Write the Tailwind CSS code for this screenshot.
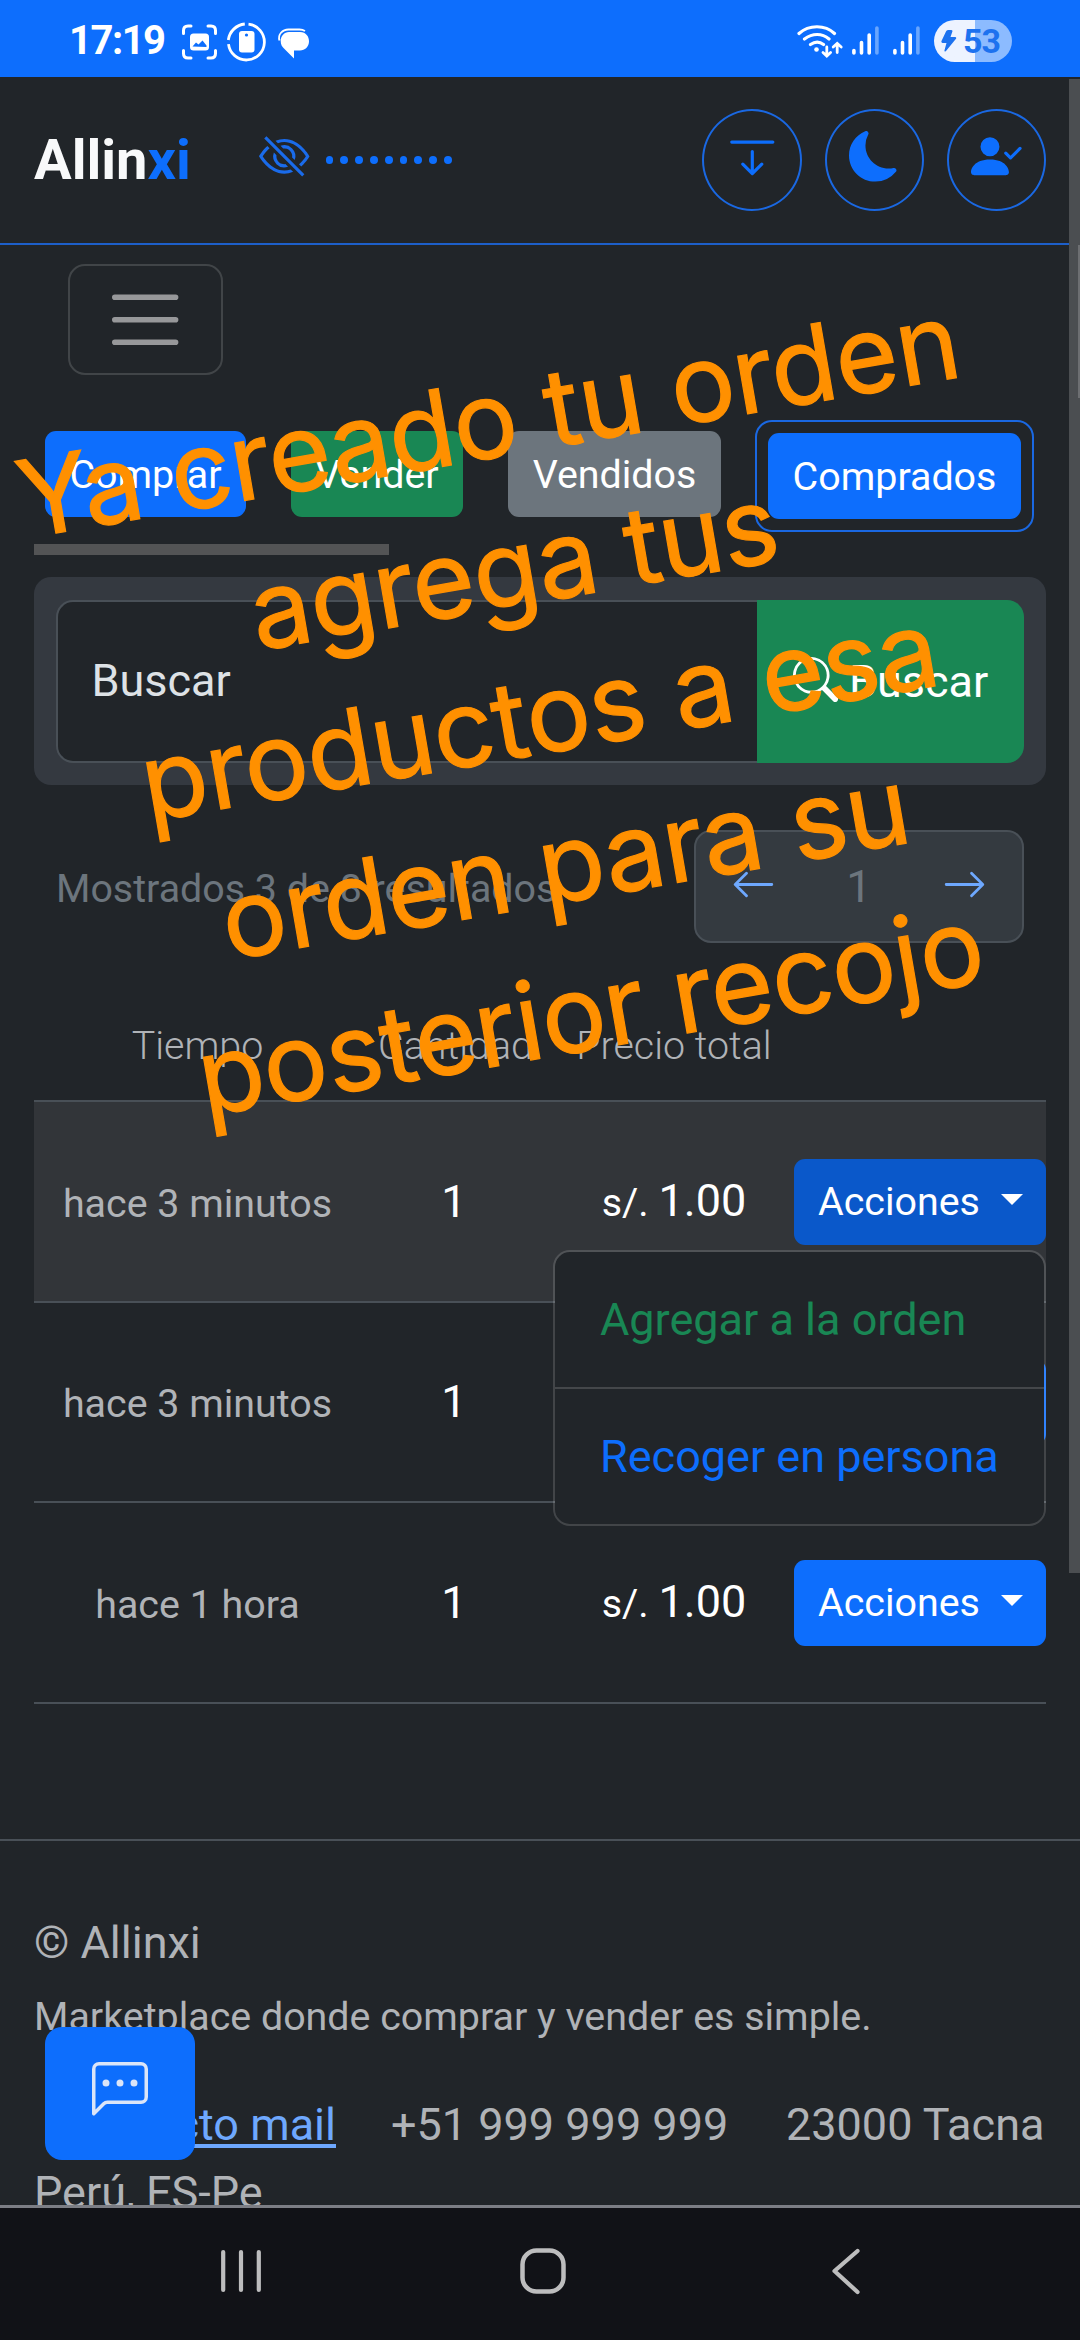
<!DOCTYPE html>
<html lang="es">
<head>
<meta charset="utf-8">
<title>Allinxi</title>
<script src="https://cdn.jsdelivr.net/npm/@tailwindcss/browser@4"></script>
</head>
<body class="relative flex h-[2340px] w-[1080px] flex-col overflow-hidden bg-[#212529] font-['Roboto',sans-serif] text-[45px] leading-[68px] text-white">

  <!-- System status bar -->
  <div class="flex h-[77px] shrink-0 items-center bg-[#0d6efd] pl-[69px]">
    <span class="w-[113px] pt-[5px] font-['Roboto',sans-serif] text-[40px] leading-[48px] font-bold tracking-[-1.500px] whitespace-nowrap">17:19</span>
    <svg class="mt-[6px] h-[40px] w-[130px]" viewBox="182 21.500 130 40" fill="none" stroke="#fff">
      <path stroke-width="3" stroke-linecap="round" d="M183.500 33v-3q0-4.500 4.500-4.500h3M208 25.500h3q4.500 0 4.500 4.500v3M215.500 50v3q0 4.500-4.500 4.500h-3M191 57.500h-3q-4.500 0-4.500-4.500v-3"/>
      <rect x="190" y="33" width="19" height="17" rx="3.500" fill="#fff" stroke="none"/>
      <path d="M192.500 46l3.500-4 2.500 2 4-4 4 5v1.500z" fill="#0d6efd" stroke="none"/>
      <path stroke-width="2.800" d="M248.500 23.600a18 18 0 1 1-20 20M228.300 39.500a18.500 18.500 0 0 1 16.500-16"/>
      <rect x="239" y="30.500" width="15.500" height="21.500" rx="3" fill="#fff" stroke="none"/>
      <circle cx="246.500" cy="34.500" r="1.600" fill="#0d6efd" stroke="none"/>
      <path d="M289 31.500h11c6 0 9 4.500 9 9.500s-4 9-9 9h-6v8l-9-9c-3-2.500-4.300-5-4.300-8.500 0-5 3.500-9 8.300-9z" fill="#fff" stroke="none"/>
      <path d="M279.500 40c-2-6 3-11 9-11h11c2.500 0 4 .5 5.500 1.500" stroke-width="1.800"/>
    </svg>
    <svg class="ml-[485px] mt-[4px] h-[40px] w-[128px]" viewBox="796 22 128 40" fill="none" stroke="#fff" stroke-width="3.200" stroke-linecap="round">
      <path d="M798 34.500c10-9 26-9 35.500 0M803.500 40c8-6 17.500-6 24.500 0M809.500 45.500c4.500-3 9-3 13 0"/>
      <circle cx="815.500" cy="50.500" r="2.300" fill="#fff" stroke="none"/>
      <path stroke-width="2.800" d="M825.800 48v8.500M822 53.500l3.800 3.500 3.800-3.500M836.200 53.500v-8.500M832.200 48l4-3.700 4 3.700"/>
      <path stroke-width="3.600" d="M852.900 51.500v2.500M860.500 43.500v10.500M868.200 36v18M893.900 51.500v2.500M901.500 43.500v10.500M909.200 36v18"/>
      <path stroke-width="3.600" stroke="#69a6fe" d="M875.900 29v25M916.900 29v25"/>
    </svg>
    <div class="mt-[5px] ml-[9px] flex h-[42px] w-[78px] items-center overflow-hidden rounded-full bg-linear-to-r from-[#edf3ff] from-52% to-[#8cbbff] to-52% pl-[7px] text-[#1d72ef]">
      <svg class="h-[22px] w-[16px]" viewBox="0 0 16 22" fill="currentColor"><path d="M5 1.500Q5.500 0 7 0h3q2 0 1.300 1.700L9.500 7H14q2 .3.800 2L5 21q-1.800 1.500-1.500-.7L5.500 13H1.500Q0 12.500.500 11z"/></svg>
      <span class="ml-[6px] text-[34px] leading-[42px] font-bold tracking-[-1px]">53</span>
    </div>
  </div>

  <div class="relative min-h-0 flex-1 overflow-hidden">
    <!-- Header -->
    <header class="flex h-[168px] items-center border-b-2 border-[#1d5fc9] px-[34px]">
      <div class="w-[225px] text-[56px] leading-[68px] font-bold text-[#f8f9fa]">Allin<span class="text-[#0d6efd]">xi</span></div>
      <svg class="mb-[7px] size-[50.600px] text-[#1a6bea]" viewBox="0 0 16 16" fill="currentColor">
        <path d="M13.359 11.238C15.060 9.720 16 8 16 8s-3-5.500-8-5.500a7 7 0 0 0-2.790.588l.770.771A6 6 0 0 1 8 3.500c2.120 0 3.879 1.168 5.168 2.457A13 13 0 0 1 14.828 8q-.086.130-.195.288c-.335.480-.830 1.120-1.465 1.755q-.247.248-.517.486z"/>
        <path d="M11.297 9.176a3.500 3.500 0 0 0-4.474-4.474l.823.823a2.500 2.500 0 0 1 2.829 2.829zm-2.943 1.299.822.822a3.500 3.500 0 0 1-4.474-4.474l.823.823a2.500 2.500 0 0 0 2.829 2.829"/>
        <path d="M3.350 5.470q-.270.240-.518.487A13 13 0 0 0 1.172 8l.195.288c.335.480.830 1.120 1.465 1.755C4.121 11.332 5.881 12.500 8 12.500c.716 0 1.390-.133 2.020-.360l.770.772A7 7 0 0 1 8 13.500C3 13.500 0 8 0 8s.939-1.721 2.641-3.238l.708.709zm10.296 8.884-12-12 .708-.708 12 12z"/>
      </svg>
      <div class="ml-[16px] flex gap-[7px]">
        <i class="size-[7.800px] rounded-full bg-[#0d6efd]"></i><i class="size-[7.800px] rounded-full bg-[#0d6efd]"></i><i class="size-[7.800px] rounded-full bg-[#0d6efd]"></i><i class="size-[7.800px] rounded-full bg-[#0d6efd]"></i><i class="size-[7.800px] rounded-full bg-[#0d6efd]"></i><i class="size-[7.800px] rounded-full bg-[#0d6efd]"></i><i class="size-[7.800px] rounded-full bg-[#0d6efd]"></i><i class="size-[7.800px] rounded-full bg-[#0d6efd]"></i><i class="size-[7.800px] rounded-full bg-[#0d6efd]"></i>
      </div>
      <div class="ml-auto flex gap-[23px] text-[#0d6efd]">
        <div class="flex h-[102px] w-[100px] items-center justify-center rounded-[50%] border-2 border-[#1a68e2] pb-[7px]">
          <svg class="size-[50.600px]" viewBox="0 0 16 16" fill="currentColor"><path d="M1 3.500a.5.5 0 0 1 .5-.5h13a.5.5 0 0 1 0 1h-13a.5.5 0 0 1-.5-.5M8 6a.5.5 0 0 1 .5.5v5.793l2.146-2.147a.5.5 0 0 1 .708.708l-3 3a.5.5 0 0 1-.708 0l-3-3a.5.5 0 0 1 .708-.708L7.500 12.293V6.500A.5.5 0 0 1 8 6"/></svg>
        </div>
        <div class="flex h-[102px] w-[99px] items-center justify-center rounded-[50%] border-2 border-[#1a68e2] pb-[7px]">
          <svg class="size-[50.600px]" viewBox="0 0 16 16" fill="currentColor"><path d="M6 .278a.77.77 0 0 1 .08.858 7.200 7.200 0 0 0-.878 3.460c0 4.021 3.278 7.277 7.318 7.277q.792-.001 1.533-.160a.79.79 0 0 1 .81.316.73.73 0 0 1-.031.893A8.350 8.350 0 0 1 8.344 16C3.734 16 0 12.286 0 7.710 0 4.266 2.114 1.312 5.124.060A.75.75 0 0 1 6 .278"/></svg>
        </div>
        <div class="flex h-[102px] w-[99px] items-center justify-center rounded-[50%] border-2 border-[#1a68e2] pb-[7px]">
          <svg class="size-[50.600px]" viewBox="0 0 16 16" fill="currentColor"><path fill-rule="evenodd" d="M15.854 5.146a.5.5 0 0 1 0 .708l-3 3a.5.5 0 0 1-.708 0l-1.500-1.500a.5.5 0 0 1 .708-.708L12.500 7.793l2.646-2.647a.5.5 0 0 1 .708 0"/><path d="M1 14s-1 0-1-1 1-4 6-4 6 3 6 4-1 1-1 1zm5-6a3 3 0 1 0 0-6 3 3 0 0 0 0 6"/></svg>
        </div>
      </div>
    </header>

    <main class="px-[34px] pt-[19px]">
      <button class="ml-[34px] flex h-[111px] w-[155px] items-center justify-center rounded-[17px] border-2 border-[#414548]">
        <svg class="size-[84.400px]" viewBox="0 0 30 30"><path stroke="#97989a" stroke-linecap="round" stroke-width="2" d="M4.200 7.200h21.600M4.200 15.200h21.600M4.200 23.200h21.600"/></svg>
      </button>

      <!-- Section tabs -->
      <div class="mt-[45px] flex h-[112px] pl-[11px] text-[39.400px] leading-[59px]">
        <div class="mt-[11px] flex h-[86px] w-[201px] items-center justify-center rounded-[11px] bg-[#0d6efd]">Comprar</div>
        <div class="mt-[11px] ml-[45px] flex h-[86px] w-[172px] items-center justify-center rounded-[11px] bg-[#198754]">Vender</div>
        <div class="mt-[11px] ml-[45px] flex h-[86px] w-[213px] items-center justify-center rounded-[11px] bg-[#6c757d]">Vendidos</div>
        <div class="ml-[34px] h-[112px] w-[279px] rounded-[17px] border-2 border-[#1a68e2] p-[11px]">
          <div class="flex h-[86px] items-center justify-center rounded-[11px] bg-[#0d6efd]">Comprados</div>
        </div>
      </div>
      <div class="mt-[12px] h-[11px] w-[355px] bg-[#535455]"></div>

      <!-- Search -->
      <div class="mt-[22px] flex h-[208px] rounded-[17px] bg-[#343940] px-[22px] pt-[23px] pb-[22px]">
        <div class="flex w-[701px] items-center rounded-l-[17px] border-2 border-r-0 border-[#495057] bg-[#212529] pb-[2px] pl-[33.500px] text-[#dee2e6]">Buscar</div>
        <div class="flex flex-1 items-center gap-[11px] rounded-r-[17px] bg-[#198754] pl-[36px]">
          <svg class="mb-[4px] size-[45px]" viewBox="0 0 16 16" fill="currentColor"><path d="M11.742 10.344a6.500 6.500 0 1 0-1.397 1.398h-.001q.044.060.098.115l3.850 3.850a1 1 0 0 0 1.415-1.414l-3.850-3.850a1 1 0 0 0-.115-.100zM12 6.500a5.500 5.500 0 1 1-11 0 5.500 5.500 0 0 1 11 0"/></svg>
          <span>Buscar</span>
        </div>
      </div>

      <!-- Results and pagination -->
      <div class="mt-[45px] flex h-[113px] items-center justify-between px-[22px] text-[#6c757d]">
        <span class="pt-[3px] text-[39.400px] leading-[59px]">Mostrados 3 de 8 resultados</span>
        <div class="flex h-full w-[330px] items-center justify-between rounded-[17px] border-2 border-[#495057] bg-[#343a40] px-[35px]">
          <svg class="mb-[4px] size-[45px] text-[#6ea8fe]" viewBox="0 0 16 16" fill="currentColor"><path d="M15 8a.5.5 0 0 0-.5-.5H2.707l3.147-3.146a.5.5 0 1 0-.708-.708l-4 4a.5.5 0 0 0 0 .708l4 4a.5.5 0 0 0 .708-.708L2.707 8.500H14.500A.5.5 0 0 0 15 8"/></svg>
          <span>1</span>
          <svg class="mb-[4px] size-[45px] text-[#6ea8fe]" viewBox="0 0 16 16" fill="currentColor"><path d="M1 8a.5.5 0 0 1 .5-.5h11.793l-3.147-3.146a.5.5 0 0 1 .708-.708l4 4a.5.5 0 0 1 0 .708l-4 4a.5.5 0 0 1-.708-.708L13.293 8.500H1.500A.5.5 0 0 1 1 8"/></svg>
        </div>
      </div>

      <!-- Purchases table -->
      <div class="mt-[47px] grid h-[112px] grid-cols-[327px_189px_244px_252px] items-center border-b-2 border-[#495057] text-center text-[39.400px] leading-[59px] font-light text-[#b0b3b7]">
        <span>Tiempo</span><span>Cantidad</span><span class="pl-[4px] whitespace-nowrap">Precio total</span>
      </div>
      <div class="relative grid h-[201px] grid-cols-[327px_189px_244px_252px] items-center border-b-2 border-[#495057] bg-[#323539] text-center">
        <span class="pt-[4px] text-[39.400px] text-[#b0b3b7]">hace 3 minutos</span>
        <span class="pr-[3px]">1</span>
        <span class="pl-[4px] whitespace-nowrap"><span class="text-[39.400px]">s/. </span>1.00</span>
        <span class="flex h-[86px] items-center rounded-[11px] bg-[#0a58ca] pl-[24px] text-[39.400px]">Acciones<svg class="mb-[4px] ml-[21px] h-[11px] w-[22px]" viewBox="0 0 22 11" fill="#fff"><path d="M0 0h22L11 11z"/></svg></span>
        <!-- Actions menu -->
        <div class="absolute top-[148px] right-0 z-10 h-[276px] w-[493px] rounded-[17px] border-2 border-white/15 bg-[#212529] bg-clip-padding text-left">
          <div class="h-[137px] border-b-2 border-[#44474a] pt-[34px] pl-[45px] text-[#198754]">Agregar a la orden</div>
          <div class="pt-[34px] pl-[45px] text-[#0d6efd]">Recoger en persona</div>
        </div>
      </div>
      <div class="grid h-[200px] grid-cols-[327px_189px_244px_252px] items-center border-b-2 border-[#495057] text-center">
        <span class="pt-[3px] text-[39.400px] text-[#b0b3b7]">hace 3 minutos</span>
        <span class="pr-[3px]">1</span>
        <span></span>
        <span class="h-[86px] rounded-[11px] bg-[#0d6efd]"></span>
      </div>
      <div class="grid h-[201px] grid-cols-[327px_189px_244px_252px] items-center border-b-2 border-[#495057] text-center">
        <span class="pt-[4px] text-[39.400px] text-[#b0b3b7]">hace 1 hora</span>
        <span class="pr-[3px]">1</span>
        <span class="pl-[4px] whitespace-nowrap"><span class="text-[39.400px]">s/. </span>1.00</span>
        <span class="flex h-[86px] items-center rounded-[11px] bg-[#0d6efd] pl-[24px] text-[39.400px]">Acciones<svg class="mb-[4px] ml-[21px] h-[11px] w-[22px]" viewBox="0 0 22 11" fill="#fff"><path d="M0 0h22L11 11z"/></svg></span>
      </div>
    </main>

    <footer class="mt-[135px] border-t-2 border-[#495057] px-[34px] pt-[68px] text-[#b0b3b7]">
      <p>© Allinxi</p>
      <p class="mt-[10px] text-[39.400px] leading-[59px]">Marketplace donde comprar y vender es simple.</p>
      <div class="mt-[45px] flex leading-[68px] whitespace-nowrap">
        <a class="w-[302px] text-right text-[#6ea8fe] underline decoration-[4px] underline-offset-[4px]">Contacto mail</a>
        <span class="ml-[55px] w-[395px]">+51 999 999 999</span>
        <span>23000 Tacna</span>
      </div>
      <p>Perú, ES-Pe</p>
    </footer>

    <!-- Floating chat button -->
    <div class="absolute top-[1950px] left-[45px] flex h-[133px] w-[150px] items-center justify-center rounded-[17px] bg-[#0d6efd] pb-[7px] text-[#dbe5f8]">
      <svg class="size-[56px]" viewBox="0 0 16 16" fill="currentColor"><path d="M14 1a1 1 0 0 1 1 1v8a1 1 0 0 1-1 1H4.414A2 2 0 0 0 3 11.586l-2 2V2a1 1 0 0 1 1-1zM2 0a2 2 0 0 0-2 2v12.793a.5.5 0 0 0 .854.353l2.853-2.853A1 1 0 0 1 4.414 12H14a2 2 0 0 0 2-2V2a2 2 0 0 0-2-2z"/><path d="M5 6a1 1 0 1 1-2 0 1 1 0 0 1 2 0m4 0a1 1 0 1 1-2 0 1 1 0 0 1 2 0m4 0a1 1 0 1 1-2 0 1 1 0 0 1 2 0"/></svg>
    </div>

    <!-- Page scrollbars -->
    <div class="absolute top-[2px] right-0 h-[1494px] w-[11px] bg-[#4b4e51]"></div>
    <div class="absolute top-[168px] right-0 h-[153px] w-[2px] bg-[#6d6f72]"></div>
  </div>

  <!-- System navigation -->
  <nav class="flex h-[135px] shrink-0 items-center border-t-[3px] border-[#7c7e85] bg-[#111217] pb-[6px] pl-[219px]">
    <svg class="h-[50px] w-[644px]" viewBox="219 2246 644 50" fill="none" stroke="#bdbdbe" stroke-width="4.200" stroke-linecap="round" stroke-linejoin="round">
      <path d="M223.200 2252v38M241 2252v38M258.800 2252v38"/>
      <rect x="522.500" y="2250.500" width="41" height="41" rx="14" stroke-width="4.500"/>
      <path d="M857.500 2251l-23 20 23 21"/>
    </svg>
  </nav>

  <!-- Tilted caption over the page -->
  <div class="absolute top-0 left-0 z-20 flex w-[819px] origin-top-left rotate-[-9.800deg] flex-col items-center pt-[421px] font-['Inter',sans-serif] text-[107px] leading-[150px] tracking-[-0.400px] whitespace-nowrap text-[#ff9000] [-webkit-text-stroke:1.200px_#ff9000]">
    <span>Ya creado tu orden</span>
    <span>agrega tus</span>
    <span>productos a esa</span>
    <span>orden para su</span>
    <span>posterior recojo</span>
  </div>
</body>
</html>
